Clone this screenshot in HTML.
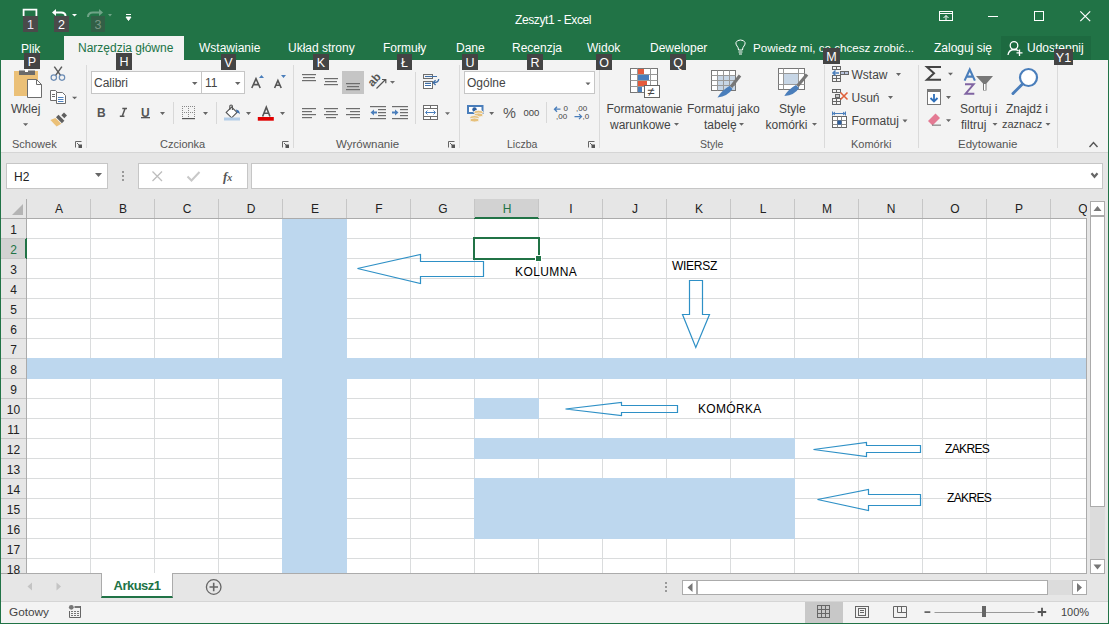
<!DOCTYPE html>
<html><head><meta charset="utf-8">
<style>
*{margin:0;padding:0;box-sizing:border-box}
html,body{width:1109px;height:624px;overflow:hidden;background:#fff;font-family:"Liberation Sans",sans-serif;position:relative}
.a{position:absolute}
.t{position:absolute;white-space:nowrap;line-height:1}
.kt{position:absolute;background:#444;color:#fff;font-size:12.5px;line-height:18px;text-align:center;height:17px;overflow:hidden}
svg{position:absolute;overflow:visible}
</style></head><body>
<div class="a" style="left:0;top:0;width:1109px;height:60px;background:#217346"></div>
<div class="t" style="left:515px;top:14px;font-size:12px;letter-spacing:-0.4px;color:#fff">Zeszyt1 - Excel</div>
<div class="a" style="left:64px;top:36px;width:120px;height:24px;background:#f3f3f3"></div>
<div class="t" style="left:21px;top:43px;font-size:12px;color:#fff">Plik</div>
<div class="t" style="left:78px;top:42px;font-size:12px;color:#217346">Narzędzia główne</div>
<div class="t" style="left:199px;top:42px;font-size:12px;color:#fff">Wstawianie</div>
<div class="t" style="left:288px;top:42px;font-size:12px;color:#fff">Układ strony</div>
<div class="t" style="left:383px;top:42px;font-size:12px;color:#fff">Formuły</div>
<div class="t" style="left:456px;top:42px;font-size:12px;color:#fff">Dane</div>
<div class="t" style="left:512px;top:42px;font-size:12px;color:#fff">Recenzja</div>
<div class="t" style="left:587px;top:42px;font-size:12px;color:#fff">Widok</div>
<div class="t" style="left:650px;top:42px;font-size:12px;color:#fff">Deweloper</div>
<div class="t" style="left:753px;top:42px;font-size:11.6px;color:#fff">Powiedz mi, co chcesz zrobić...</div>
<div class="t" style="left:934px;top:42px;font-size:12px;color:#fff">Zaloguj się</div>
<div class="a" style="left:1001px;top:36px;width:90px;height:24px;background:#1d6a40"></div>
<div class="t" style="left:1027px;top:42px;font-size:12px;color:#fff">Udostępnij</div>
<div class="a" style="left:0;top:60px;width:1109px;height:93px;background:#f3f3f3;border-bottom:1px solid #d5d5d5"></div>
<div class="a" style="left:0;top:153px;width:1109px;height:421px;background:#e6e6e6"></div>
<div class="a" style="left:6px;top:163px;width:102px;height:26px;background:#fff;border:1px solid #c6c6c6"></div>
<div class="t" style="left:14px;top:171px;font-size:12px;color:#222">H2</div>
<div class="a" style="left:138px;top:163px;width:110px;height:26px;background:#fff;border:1px solid #c6c6c6"></div>
<div class="a" style="left:251px;top:163px;width:852px;height:26px;background:#fff;border:1px solid #c6c6c6"></div>
<svg style="left:0;top:0" width="1" height="1">
<path d="M95,173 H102 L98.5,177 Z" fill="#666"/>
<g fill="#999"><rect x="122" y="171" width="2" height="2"/><rect x="122" y="175" width="2" height="2"/><rect x="122" y="179" width="2" height="2"/></g>
<path d="M152.5,171.5 L162,181 M162,171.5 L152.5,181" stroke="#bdbdbd" stroke-width="1.3" fill="none"/>
<path d="M187.5,176.5 L191.5,180.5 L199.5,172" stroke="#c8c8c8" stroke-width="2" fill="none"/>
<path d="M1091.5,173.2 L1094.5,176.8 L1097.5,173.2" stroke="#666" stroke-width="2.2" fill="none"/>
</svg>
<div class="t" style="left:223px;top:170px;font-size:13px;font-style:italic;font-family:'Liberation Serif',serif;font-weight:bold;color:#555">f<span style="font-size:10px">x</span></div>

<!-- ===== ribbon content ===== -->
<!-- group separators -->
<div class="a" style="left:86px;top:65px;width:1px;height:83px;background:#dadada"></div>
<div class="a" style="left:293px;top:65px;width:1px;height:83px;background:#dadada"></div>
<div class="a" style="left:459px;top:65px;width:1px;height:83px;background:#dadada"></div>
<div class="a" style="left:599px;top:65px;width:1px;height:83px;background:#dadada"></div>
<div class="a" style="left:824px;top:65px;width:1px;height:83px;background:#dadada"></div>
<div class="a" style="left:918px;top:65px;width:1px;height:83px;background:#dadada"></div>
<div class="a" style="left:1057px;top:65px;width:1px;height:83px;background:#dadada"></div>
<!-- group labels -->
<div class="t" style="left:12px;top:139px;font-size:11px;color:#555">Schowek</div>
<div class="t" style="left:160px;top:139px;font-size:11px;color:#555">Czcionka</div>
<div class="t" style="left:336px;top:139px;font-size:11.5px;color:#555">Wyrównanie</div>
<div class="t" style="left:507px;top:139px;font-size:10.5px;color:#555">Liczba</div>
<div class="t" style="left:700px;top:139px;font-size:10.5px;color:#555">Style</div>
<div class="t" style="left:851px;top:139px;font-size:11px;color:#555">Komórki</div>
<div class="t" style="left:958px;top:139px;font-size:11.5px;color:#555">Edytowanie</div>
<!-- launchers -->
<svg style="left:0;top:0" width="1" height="1">
<path d="M75.5,147.5 V141.5 H81.5" fill="none" stroke="#666" stroke-width="1"/><path d="M77,143 L80,146" stroke="#666" stroke-width="1"/><rect x="78.5" y="144.5" width="3.5" height="3.5" fill="#555"/>
<path d="M282.5,147.5 V141.5 H288.5" fill="none" stroke="#666" stroke-width="1"/><path d="M284,143 L287,146" stroke="#666" stroke-width="1"/><rect x="285.5" y="144.5" width="3.5" height="3.5" fill="#555"/>
<path d="M448.5,147.5 V141.5 H454.5" fill="none" stroke="#666" stroke-width="1"/><path d="M450,143 L453,146" stroke="#666" stroke-width="1"/><rect x="451.5" y="144.5" width="3.5" height="3.5" fill="#555"/>
<path d="M588.5,147.5 V141.5 H594.5" fill="none" stroke="#666" stroke-width="1"/><path d="M590,143 L593,146" stroke="#666" stroke-width="1"/><rect x="591.5" y="144.5" width="3.5" height="3.5" fill="#555"/>
<path d="M1089.5,147 L1093.5,142.5 L1097.5,147" fill="none" stroke="#555" stroke-width="1.4"/>
</svg>

<!-- ===== Clipboard ===== -->
<svg style="left:0;top:0" width="1" height="1">
<rect x="14" y="71" width="24" height="25" fill="#ebc077"/>
<rect x="19" y="70.5" width="16" height="4.5" fill="#6a6a6a"/>
<rect x="25" y="69" width="3" height="3" fill="#fff"/>
<path d="M27.5,79.5 H36.5 L41.5,84.5 V97.5 H27.5 Z" fill="#fff" stroke="#6d6d6d" stroke-width="1"/>
<path d="M36.5,79.5 V84.5 H41.5" fill="none" stroke="#6d6d6d" stroke-width="1"/>
<!-- scissors -->
<path d="M54.3,66.6 L60.6,75.4 M61.9,66.6 L55.6,75.4" stroke="#5a5a5a" stroke-width="1.5" fill="none"/>
<circle cx="53.8" cy="77.6" r="2.7" fill="none" stroke="#6b8cb5" stroke-width="1.2"/>
<circle cx="62" cy="77.6" r="2.7" fill="none" stroke="#6b8cb5" stroke-width="1.2"/>
<!-- copy -->
<path d="M50.5,90.5 H55.5 L57.5,92.5 V100.5 H50.5 Z" fill="#fff" stroke="#6d6d6d"/>
<path d="M52,94.5 H55 M52,96.5 H55" stroke="#6d6d6d"/>
<path d="M56.5,92.5 H62.5 L65.5,95.5 V103.5 H56.5 Z" fill="#fff" stroke="#6d6d6d"/>
<path d="M58,97.5 H63.5 M58,99.5 H63.5 M58,101.5 H63.5" stroke="#4f81bd"/>
<!-- painter -->
<path d="M61.3,115.2 L64,112.5 L67,115.5 L64.3,118.2 Z" fill="#5f5f5f"/>
<path d="M56,117.3 L58.5,114.8 L64.4,120.7 L61.9,123.2 Z" fill="#5f5f5f"/>
<path d="M55.4,117.9 L61.3,123.8 L56.6,126.4 L50.4,120 Z" fill="#ebc077"/>
<!-- arrows -->
<path d="M23,123.3 H28.2 L25.6,126 Z M72,96.7 H77.2 L74.6,99.3 Z" fill="#666"/>
</svg>
<div class="t" style="left:11px;top:103px;font-size:12px;color:#444">Wklej</div>

<!-- ===== Font ===== -->
<div class="a" style="left:91px;top:71px;width:111px;height:23px;background:#fff;border:1px solid #c6c6c6"></div>
<div class="a" style="left:201px;top:71px;width:44px;height:23px;background:#fff;border:1px solid #c6c6c6"></div>
<div class="t" style="left:94px;top:77px;font-size:12px;color:#444">Calibri</div>
<div class="t" style="left:205px;top:77px;font-size:12px;color:#444">11</div>
<div class="t" style="left:97px;top:107px;font-size:12px;font-weight:bold;color:#555">B</div>
<div class="t" style="left:141px;top:107px;font-size:12px;font-weight:bold;color:#555">U</div>
<svg style="left:0;top:0" width="1" height="1">
<path d="M259,78 L261.5,75 L264,78 Z M281,75 H286 L283.5,78 Z" fill="#4a7ebb"/>
<rect x="141" y="117" width="9" height="1.3" fill="#555"/>
<g fill="#666">
<path d="M192,82 H197.5 L194.75,85 Z M235,82 H240.5 L237.75,85 Z"/>
<path d="M160,112 H165 L162.5,115 Z M203,112 H208 L205.5,115 Z M246,112 H251 L248.5,115 Z M280,112 H285 L282.5,115 Z"/>
</g>
<rect x="173" y="102" width="1" height="22" fill="#d8d8d8"/>
<rect x="216" y="102" width="1" height="22" fill="#d8d8d8"/>
<!-- borders icon -->
<g fill="#888">
<path d="M182,106 h13 v1 h-13z M182,106 v13 h1 v-13z M194,106 v13 h1 v-13z" fill="none"/>
</g>
<g stroke="#888" stroke-width="1" stroke-dasharray="1,1" fill="none">
<path d="M182.5,106 V118 M194.5,106 V118 M182,106.5 H195 M188.5,106 V118 M182,112.5 H195"/>
</g>
<rect x="182" y="118" width="13" height="1.2" fill="#555"/>
<!-- fill icon -->
<path d="M226.2,112.4 L231.6,107 L237,112.4 L231.6,117.8 Z" fill="#fff" stroke="#555" stroke-width="1.1"/>
<path d="M229.8,110 V106 Q229.8,105 231.1,105 Q232.4,105 232.4,106 V110" fill="none" stroke="#555" stroke-width="1.1"/>
<path d="M235.8,109.6 Q239.8,110 239.8,114.2 Q238.5,112.8 236.9,112.6 Z" fill="#3f6fa8"/>
<rect x="224" y="117.5" width="16" height="3" fill="#b3cde8"/>
<rect x="257.8" y="117" width="16" height="3.7" fill="#e00000"/>
</svg>

<svg style="left:0;top:0" width="1" height="1">
<g stroke="#555" stroke-width="1.6" fill="none">
<path d="M251.8,88 L256,78.6 L260.2,88 M253.3,84.6 H258.7"/>
<path d="M274.6,88 L277.9,80.4 L281.2,88 M275.8,85.3 H280"/>
<path d="M262.6,116.5 L266.3,107.2 L270,116.5 M264.2,113.2 H268.4"/>
</g>
<path d="M125,108.7 L122.2,116.2 M122.3,108.6 H127 M119.8,116.2 H124.4" stroke="#555" stroke-width="1.5" fill="none"/>
</svg>
<!-- ===== Alignment ===== -->
<div class="a" style="left:342px;top:71px;width:22px;height:23px;background:#c5c5c5"></div>
<svg style="left:0;top:0" width="1" height="1">
<g fill="#6d6d6d">
<rect x="302" y="74" width="14" height="1.2"/><rect x="303" y="77" width="12" height="1.2"/><rect x="302" y="80" width="14" height="1.2"/>
<rect x="324" y="78" width="14" height="1.2"/><rect x="325" y="81" width="12" height="1.2"/><rect x="324" y="84" width="14" height="1.2"/>
<rect x="346" y="83" width="14" height="1.2"/><rect x="347" y="86" width="12" height="1.2"/><rect x="346" y="89" width="14" height="1.2"/>
<rect x="302" y="108" width="14" height="1.2"/><rect x="302" y="111" width="10" height="1.2"/><rect x="302" y="114" width="14" height="1.2"/><rect x="302" y="117" width="10" height="1.2"/>
<rect x="324" y="108" width="14" height="1.2"/><rect x="326" y="111" width="10" height="1.2"/><rect x="324" y="114" width="14" height="1.2"/><rect x="326" y="117" width="10" height="1.2"/>
<rect x="346" y="108" width="14" height="1.2"/><rect x="350" y="111" width="10" height="1.2"/><rect x="346" y="114" width="14" height="1.2"/><rect x="350" y="117" width="10" height="1.2"/>
<!-- indents -->
<rect x="370" y="106" width="16" height="1.2"/><rect x="378" y="109" width="8" height="1.2"/><rect x="378" y="112" width="8" height="1.2"/><rect x="378" y="115" width="8" height="1.2"/><rect x="370" y="118" width="16" height="1.2"/>
<rect x="392" y="106" width="16" height="1.2"/><rect x="400" y="109" width="8" height="1.2"/><rect x="400" y="112" width="8" height="1.2"/><rect x="400" y="115" width="8" height="1.2"/><rect x="392" y="118" width="16" height="1.2"/>
<path d="M390,81 H395 L392.5,83.7 Z M445,112.2 H450 L447.5,115 Z"/>
</g>
<path d="M370.5,112.5 L374,109.5 V111.5 H377 V113.5 H374 V115.5 Z" fill="#4a7ebb"/>
<path d="M398.5,112.5 L395,109.5 V111.5 H392 V113.5 H395 V115.5 Z" fill="#4a7ebb"/>
<!-- orientation -->
<text x="0" y="0" transform="translate(372.5,87.3) rotate(-48)" font-family="Liberation Sans" font-size="11.5" font-weight="bold" fill="#555">ab</text>
<path d="M376.5,88.5 L385.5,79.5 M382,79.5 H385.8 V83.3" stroke="#555" stroke-width="1.2" fill="none"/>
<!-- wrap text -->
<rect x="423.5" y="74.5" width="9" height="4" fill="none" stroke="#6d6d6d"/>
<rect x="423.5" y="81.5" width="9" height="7" fill="#fff" stroke="#6d6d6d"/>
<path d="M425,76.5 H437 M425,83.4 H431 M425,85.5 H431" stroke="#3f6fa8" stroke-width="1.1"/>
<path d="M438.7,79 Q438.7,82.6 433.5,82.6" fill="none" stroke="#3f6fa8" stroke-width="1.3"/>
<path d="M435.6,80.2 L433.1,82.6 L435.6,85" fill="none" stroke="#3f6fa8" stroke-width="1.3"/>
<!-- merge -->
<rect x="423.5" y="105.5" width="14" height="14" fill="#fff" stroke="#6d6d6d"/>
<path d="M423.5,108.5 H437.5 M423.5,116.5 H437.5 M430.5,105.5 V108.5 M430.5,116.5 V119.5" stroke="#6d6d6d" fill="none"/>
<path d="M426,112.5 H435 M427.5,110.5 L425.5,112.5 L427.5,114.5 M433.5,110.5 L435.5,112.5 L433.5,114.5" stroke="#4a7ebb" fill="none"/>
</svg>
<div class="a" style="left:415px;top:72px;width:1px;height:52px;background:#d8d8d8"></div>

<!-- ===== Number ===== -->
<div class="a" style="left:464px;top:71px;width:131px;height:23px;background:#fff;border:1px solid #c6c6c6"></div>
<div class="t" style="left:467px;top:77px;font-size:12px;color:#444">Ogólne</div>
<div class="t" style="left:503px;top:106px;font-size:14.5px;color:#555">%</div>
<div class="t" style="left:523.5px;top:107.5px;font-size:9.5px;color:#444">000</div>
<div class="t" style="left:563.5px;top:105px;font-size:8px;color:#444">0</div>
<div class="t" style="left:556px;top:112.5px;font-size:8px;color:#444">,00</div>
<div class="t" style="left:576px;top:105px;font-size:8px;color:#444">,00</div>
<div class="t" style="left:582.5px;top:112.5px;font-size:8px;color:#444">,0</div>
<div class="a" style="left:546px;top:102px;width:1px;height:21px;background:#d8d8d8"></div>
<svg style="left:0;top:0" width="1" height="1">
<path d="M585.5,82.5 H590.5 L588,85.2 Z M489.2,112 H494.1 L491.65,115 Z" fill="#666"/>
<rect x="468" y="106" width="14.5" height="7" fill="#fff" stroke="#4a7ebb" stroke-width="2"/>
<circle cx="474.5" cy="109.5" r="2.2" fill="#2e5f9e"/>
<g fill="#e6c07b" stroke="#f3f3f3" stroke-width="0.9">
<ellipse cx="478.5" cy="112.3" rx="4.6" ry="2"/>
<ellipse cx="478.5" cy="115" rx="4.6" ry="2"/>
<ellipse cx="474.5" cy="117.5" rx="4.6" ry="2"/>
<ellipse cx="474.5" cy="120" rx="4.6" ry="2"/>
</g>
<path d="M554.5,109.2 H560.5 M557,106.7 L554.5,109.2 L557,111.7" stroke="#4a7ebb" stroke-width="1.3" fill="none"/>
<path d="M574.5,116.6 H581.5 M579,114.1 L581.5,116.6 L579,119.1" stroke="#4a7ebb" stroke-width="1.3" fill="none"/>
</svg>

<!-- ===== Styles ===== -->
<div class="t" style="left:606.5px;top:103px;font-size:12px;color:#444">Formatowanie</div>
<div class="t" style="left:610px;top:119px;font-size:12px;color:#444">warunkowe</div>
<div class="t" style="left:687px;top:103px;font-size:12px;color:#444">Formatuj jako</div>
<div class="t" style="left:704px;top:119px;font-size:12px;color:#444">tabelę</div>
<div class="t" style="left:779px;top:103px;font-size:12px;color:#444">Style</div>
<div class="t" style="left:765.5px;top:119px;font-size:12px;color:#444">komórki</div>
<svg style="left:0;top:0" width="1" height="1">
<path d="M674,123 H679 L676.5,125.7 Z M739,123 H744 L741.5,125.7 Z M812,123 H817 L814.5,125.7 Z" fill="#666"/>
<!-- cond fmt -->
<rect x="630.5" y="68.5" width="27" height="24" fill="#fff" stroke="#777"/>
<path d="M637.5,68.5 V92.5 M650.5,68.5 V92.5 M630.5,74.5 H657.5 M630.5,80.5 H657.5 M630.5,86.5 H657.5" stroke="#999" fill="none"/>
<rect x="638" y="69" width="6" height="5" fill="#e55b3c"/>
<rect x="638" y="75" width="11" height="5" fill="#4a7ebb"/>
<rect x="638" y="81" width="9" height="5" fill="#e55b3c"/>
<rect x="638" y="87" width="4" height="5" fill="#4a7ebb"/>
<rect x="644.5" y="85.5" width="15" height="12" fill="#fff" stroke="#666"/>
<text x="647.3" y="96" font-family="Liberation Sans" font-size="13" fill="#444">≠</text>
<!-- fmt as table -->
<rect x="711.5" y="70.5" width="24" height="20" fill="#fff" stroke="#777"/>
<rect x="718" y="75" width="17" height="15" fill="#c7d6e6"/>
<path d="M717.5,70.5 V90.5 M723.5,70.5 V90.5 M729.5,70.5 V90.5 M711.5,75.5 H735.5 M711.5,80.5 H735.5 M711.5,85.5 H735.5" stroke="#999" fill="none"/>
<path d="M740,75.5 L731,87" stroke="#777" stroke-width="3.2"/>
<path d="M729.5,86 L732.5,89 Q728,96 717.5,97.5 Q722,90 729.5,86 Z" fill="#4a7ebb"/>
<!-- cell styles -->
<rect x="778.5" y="68.5" width="26" height="21" fill="#fff" stroke="#777"/>
<rect x="784" y="74" width="14" height="10" fill="#c7d6e6"/>
<path d="M783.5,68.5 V89.5 M798.5,68.5 V89.5 M778.5,73.5 H804.5 M778.5,84.5 H804.5" stroke="#999" fill="none"/>
<path d="M807,74.5 L797.5,86" stroke="#777" stroke-width="3.2"/>
<path d="M796,85 L799,88 Q795,95 784.3,96 Q788.5,89 796,85 Z" fill="#4a7ebb"/>
</svg>

<!-- ===== Cells ===== -->
<div class="t" style="left:851.5px;top:69px;font-size:12px;color:#444">Wstaw</div>
<div class="t" style="left:851.5px;top:92px;font-size:12px;color:#444">Usuń</div>
<div class="t" style="left:851.5px;top:115px;font-size:12px;color:#444">Formatuj</div>
<svg style="left:0;top:0" width="1" height="1">
<path d="M896,73 H901 L898.5,76 Z M888,96 H893 L890.5,99 Z M902.5,119.4 H907.5 L905,122.4 Z" fill="#666"/>
<g fill="none" stroke="#666" stroke-width="1">
<rect x="832.5" y="66.5" width="4" height="3"/><rect x="836.5" y="66.5" width="4" height="3"/>
<rect x="832.5" y="75.5" width="4" height="3"/><rect x="836.5" y="75.5" width="4" height="3"/>
<rect x="832.5" y="78.5" width="4" height="3"/><rect x="836.5" y="78.5" width="4" height="3"/>
<rect x="840.5" y="71.5" width="4" height="3" fill="#b8c3dc"/><rect x="844.5" y="71.5" width="4" height="3" fill="#b8c3dc"/>
<rect x="832.5" y="89.5" width="4" height="3"/><rect x="836.5" y="89.5" width="4" height="3"/>
<rect x="835.5" y="94.5" width="4" height="3" fill="#ccc"/>
<rect x="832.5" y="98.5" width="4" height="3"/><rect x="836.5" y="98.5" width="4" height="3"/>
<rect x="832.5" y="101.5" width="4" height="3"/><rect x="836.5" y="101.5" width="4" height="3"/>
</g>
<path d="M833,73 H839 M835.5,70.5 L833,73 L835.5,75.5" stroke="#4a7ebb" stroke-width="1.5" fill="none"/>
<path d="M840.5,92.5 L847.5,99.5 M847.5,92.5 L840.5,99.5" stroke="#e0603a" stroke-width="1.6"/>
<rect x="832.5" y="116.5" width="14" height="11" fill="#fff" stroke="#666"/>
<path d="M837.5,116.5 V127.5 M841.5,116.5 V127.5 M832.5,120.5 H846.5 M832.5,124.5 H846.5" stroke="#888"/>
<rect x="837.5" y="120.5" width="4" height="4" fill="#2e5f9e"/>
<path d="M833,113.5 H845 M832.5,111.5 V115.5 M845.5,111.5 V115.5 M835,112 L833,113.5 L835,115 M843,112 L845,113.5 L843,115" stroke="#4a7ebb" fill="none"/>
</svg>

<!-- ===== Editing ===== -->
<div class="t" style="left:960px;top:103px;font-size:12px;color:#444">Sortuj i</div>
<div class="t" style="left:961px;top:119px;font-size:12px;color:#444">filtruj</div>
<div class="t" style="left:1006px;top:103px;font-size:12px;color:#444">Znajdź i</div>
<div class="t" style="left:1002px;top:119px;font-size:11px;color:#444">zaznacz</div>
<svg style="left:0;top:0" width="1" height="1">
<path d="M948,72.7 H953 L950.5,75.6 Z M946,96 H951 L948.5,99 Z M946,119.2 H951 L948.5,122 Z M992.5,123 H997.5 L995,125.7 Z M1045.5,123 H1050.5 L1048,125.7 Z" fill="#666"/>
<path d="M941,67 H927 L934,73.3 L927,79.7 H941" fill="none" stroke="#444" stroke-width="2"/>
<rect x="927.5" y="89.5" width="13" height="15" fill="#fff" stroke="#777"/>
<rect x="927" y="89" width="14" height="3" fill="#777"/>
<path d="M934,94 V101.5 M930.5,98 L934,101.5 L937.5,98" stroke="#2e6fba" stroke-width="1.8" fill="none"/>
<path d="M928,121 L935.5,113.5 L940,118 L932.5,125.5 Z" fill="#e47a93"/>
<rect x="932" y="124.6" width="9" height="1.1" fill="#777"/>
<path d="M964.6,80.6 L969.75,69.6 L974.9,80.6 M966.5,76.6 H973" stroke="#4a7ebb" stroke-width="2.1" fill="none"/>
<path d="M965,84.3 H973.6 L965.6,93.7 H974.3" stroke="#8064a2" stroke-width="2" fill="none"/>
<path d="M976,76 H993 L986.5,83.5 V90.5 H983 V83.5 Z" fill="#777"/>
<rect x="984" y="84" width="1.5" height="6" fill="#fff"/>
<circle cx="1028.5" cy="77.5" r="8.5" fill="#fff" stroke="#4a7ebb" stroke-width="2.2"/>
<path d="M1022.5,84 L1013,93.5" stroke="#4a7ebb" stroke-width="3" stroke-linecap="round"/>
</svg>

<div class="a" style="left:27px;top:219px;width:1059px;height:354px;background:#fff"></div>
<div class="a" style="left:90px;top:219px;width:1px;height:354px;background:#dadcdd"></div>
<div class="a" style="left:154px;top:219px;width:1px;height:354px;background:#dadcdd"></div>
<div class="a" style="left:218px;top:219px;width:1px;height:354px;background:#dadcdd"></div>
<div class="a" style="left:282px;top:219px;width:1px;height:354px;background:#dadcdd"></div>
<div class="a" style="left:346px;top:219px;width:1px;height:354px;background:#dadcdd"></div>
<div class="a" style="left:410px;top:219px;width:1px;height:354px;background:#dadcdd"></div>
<div class="a" style="left:474px;top:219px;width:1px;height:354px;background:#dadcdd"></div>
<div class="a" style="left:538px;top:219px;width:1px;height:354px;background:#dadcdd"></div>
<div class="a" style="left:602px;top:219px;width:1px;height:354px;background:#dadcdd"></div>
<div class="a" style="left:666px;top:219px;width:1px;height:354px;background:#dadcdd"></div>
<div class="a" style="left:730px;top:219px;width:1px;height:354px;background:#dadcdd"></div>
<div class="a" style="left:794px;top:219px;width:1px;height:354px;background:#dadcdd"></div>
<div class="a" style="left:858px;top:219px;width:1px;height:354px;background:#dadcdd"></div>
<div class="a" style="left:922px;top:219px;width:1px;height:354px;background:#dadcdd"></div>
<div class="a" style="left:986px;top:219px;width:1px;height:354px;background:#dadcdd"></div>
<div class="a" style="left:1050px;top:219px;width:1px;height:354px;background:#dadcdd"></div>
<div class="a" style="left:27px;top:238px;width:1059px;height:1px;background:#dadcdd"></div>
<div class="a" style="left:27px;top:258px;width:1059px;height:1px;background:#dadcdd"></div>
<div class="a" style="left:27px;top:278px;width:1059px;height:1px;background:#dadcdd"></div>
<div class="a" style="left:27px;top:298px;width:1059px;height:1px;background:#dadcdd"></div>
<div class="a" style="left:27px;top:318px;width:1059px;height:1px;background:#dadcdd"></div>
<div class="a" style="left:27px;top:338px;width:1059px;height:1px;background:#dadcdd"></div>
<div class="a" style="left:27px;top:358px;width:1059px;height:1px;background:#dadcdd"></div>
<div class="a" style="left:27px;top:378px;width:1059px;height:1px;background:#dadcdd"></div>
<div class="a" style="left:27px;top:398px;width:1059px;height:1px;background:#dadcdd"></div>
<div class="a" style="left:27px;top:418px;width:1059px;height:1px;background:#dadcdd"></div>
<div class="a" style="left:27px;top:438px;width:1059px;height:1px;background:#dadcdd"></div>
<div class="a" style="left:27px;top:458px;width:1059px;height:1px;background:#dadcdd"></div>
<div class="a" style="left:27px;top:478px;width:1059px;height:1px;background:#dadcdd"></div>
<div class="a" style="left:27px;top:498px;width:1059px;height:1px;background:#dadcdd"></div>
<div class="a" style="left:27px;top:518px;width:1059px;height:1px;background:#dadcdd"></div>
<div class="a" style="left:27px;top:538px;width:1059px;height:1px;background:#dadcdd"></div>
<div class="a" style="left:27px;top:558px;width:1059px;height:1px;background:#dadcdd"></div>
<div class="a" style="left:282px;top:219px;width:65px;height:354px;background:#bdd7ee"></div>
<div class="a" style="left:27px;top:358px;width:1059px;height:21px;background:#bdd7ee"></div>
<div class="a" style="left:474px;top:398px;width:65px;height:21px;background:#bdd7ee"></div>
<div class="a" style="left:474px;top:438px;width:321px;height:21px;background:#bdd7ee"></div>
<div class="a" style="left:474px;top:478px;width:321px;height:61px;background:#bdd7ee"></div>
<div class="a" style="left:1086px;top:218px;width:1px;height:356px;background:#ababab"></div>
<div class="a" style="left:0px;top:573px;width:1087px;height:1px;background:#ababab"></div>
<div class="a" style="left:1px;top:199px;width:1085px;height:19px;background:#e6e6e6"></div>
<div class="a" style="left:474px;top:199px;width:65px;height:19px;background:#d2d2d2"></div>
<div class="a" style="left:1px;top:218px;width:1085px;height:1px;background:#ababab"></div>
<div class="a" style="left:474px;top:217px;width:65px;height:2px;background:#217346"></div>
<div class="a" style="left:26px;top:199px;width:1px;height:19px;background:#c6c6c6"></div>
<div class="a" style="left:90px;top:199px;width:1px;height:19px;background:#c6c6c6"></div>
<div class="a" style="left:154px;top:199px;width:1px;height:19px;background:#c6c6c6"></div>
<div class="a" style="left:218px;top:199px;width:1px;height:19px;background:#c6c6c6"></div>
<div class="a" style="left:282px;top:199px;width:1px;height:19px;background:#c6c6c6"></div>
<div class="a" style="left:346px;top:199px;width:1px;height:19px;background:#c6c6c6"></div>
<div class="a" style="left:410px;top:199px;width:1px;height:19px;background:#c6c6c6"></div>
<div class="a" style="left:474px;top:199px;width:1px;height:19px;background:#c6c6c6"></div>
<div class="a" style="left:538px;top:199px;width:1px;height:19px;background:#c6c6c6"></div>
<div class="a" style="left:602px;top:199px;width:1px;height:19px;background:#c6c6c6"></div>
<div class="a" style="left:666px;top:199px;width:1px;height:19px;background:#c6c6c6"></div>
<div class="a" style="left:730px;top:199px;width:1px;height:19px;background:#c6c6c6"></div>
<div class="a" style="left:794px;top:199px;width:1px;height:19px;background:#c6c6c6"></div>
<div class="a" style="left:858px;top:199px;width:1px;height:19px;background:#c6c6c6"></div>
<div class="a" style="left:922px;top:199px;width:1px;height:19px;background:#c6c6c6"></div>
<div class="a" style="left:986px;top:199px;width:1px;height:19px;background:#c6c6c6"></div>
<div class="a" style="left:1050px;top:199px;width:1px;height:19px;background:#c6c6c6"></div>
<div class="t" style="left:29px;width:60px;text-align:center;top:203px;font-size:12px;color:#222">A</div>
<div class="t" style="left:93px;width:60px;text-align:center;top:203px;font-size:12px;color:#222">B</div>
<div class="t" style="left:157px;width:60px;text-align:center;top:203px;font-size:12px;color:#222">C</div>
<div class="t" style="left:221px;width:60px;text-align:center;top:203px;font-size:12px;color:#222">D</div>
<div class="t" style="left:285px;width:60px;text-align:center;top:203px;font-size:12px;color:#222">E</div>
<div class="t" style="left:349px;width:60px;text-align:center;top:203px;font-size:12px;color:#222">F</div>
<div class="t" style="left:413px;width:60px;text-align:center;top:203px;font-size:12px;color:#222">G</div>
<div class="t" style="left:477px;width:60px;text-align:center;top:203px;font-size:12px;color:#217346">H</div>
<div class="t" style="left:541px;width:60px;text-align:center;top:203px;font-size:12px;color:#222">I</div>
<div class="t" style="left:605px;width:60px;text-align:center;top:203px;font-size:12px;color:#222">J</div>
<div class="t" style="left:669px;width:60px;text-align:center;top:203px;font-size:12px;color:#222">K</div>
<div class="t" style="left:733px;width:60px;text-align:center;top:203px;font-size:12px;color:#222">L</div>
<div class="t" style="left:797px;width:60px;text-align:center;top:203px;font-size:12px;color:#222">M</div>
<div class="t" style="left:861px;width:60px;text-align:center;top:203px;font-size:12px;color:#222">N</div>
<div class="t" style="left:925px;width:60px;text-align:center;top:203px;font-size:12px;color:#222">O</div>
<div class="t" style="left:989px;width:60px;text-align:center;top:203px;font-size:12px;color:#222">P</div>
<div class="t" style="left:1053px;width:60px;text-align:center;top:203px;font-size:12px;color:#222">Q</div>
<div class="a" style="left:1087px;top:199px;width:21px;height:20px;background:#e6e6e6"></div>
<svg style="left:0;top:0" width="1" height="1"><polygon points="12,215 23,215 23,204" fill="#b4b4b4"/></svg>
<div class="a" style="left:1px;top:219px;width:25px;height:354px;background:#e6e6e6"></div>
<div class="a" style="left:1px;top:239px;width:25px;height:19px;background:#d2d2d2"></div>
<div class="a" style="left:26px;top:199px;width:1px;height:375px;background:#ababab"></div>
<div class="a" style="left:25px;top:238px;width:2px;height:21px;background:#217346"></div>
<div class="a" style="left:1px;top:238px;width:25px;height:1px;background:#c6c6c6"></div>
<div class="t" style="left:0px;width:27px;text-align:center;top:224px;font-size:12px;color:#222">1</div>
<div class="a" style="left:1px;top:258px;width:25px;height:1px;background:#c6c6c6"></div>
<div class="t" style="left:0px;width:27px;text-align:center;top:244px;font-size:12px;color:#217346">2</div>
<div class="a" style="left:1px;top:278px;width:25px;height:1px;background:#c6c6c6"></div>
<div class="t" style="left:0px;width:27px;text-align:center;top:264px;font-size:12px;color:#222">3</div>
<div class="a" style="left:1px;top:298px;width:25px;height:1px;background:#c6c6c6"></div>
<div class="t" style="left:0px;width:27px;text-align:center;top:284px;font-size:12px;color:#222">4</div>
<div class="a" style="left:1px;top:318px;width:25px;height:1px;background:#c6c6c6"></div>
<div class="t" style="left:0px;width:27px;text-align:center;top:304px;font-size:12px;color:#222">5</div>
<div class="a" style="left:1px;top:338px;width:25px;height:1px;background:#c6c6c6"></div>
<div class="t" style="left:0px;width:27px;text-align:center;top:324px;font-size:12px;color:#222">6</div>
<div class="a" style="left:1px;top:358px;width:25px;height:1px;background:#c6c6c6"></div>
<div class="t" style="left:0px;width:27px;text-align:center;top:344px;font-size:12px;color:#222">7</div>
<div class="a" style="left:1px;top:378px;width:25px;height:1px;background:#c6c6c6"></div>
<div class="t" style="left:0px;width:27px;text-align:center;top:364px;font-size:12px;color:#222">8</div>
<div class="a" style="left:1px;top:398px;width:25px;height:1px;background:#c6c6c6"></div>
<div class="t" style="left:0px;width:27px;text-align:center;top:384px;font-size:12px;color:#222">9</div>
<div class="a" style="left:1px;top:418px;width:25px;height:1px;background:#c6c6c6"></div>
<div class="t" style="left:0px;width:27px;text-align:center;top:404px;font-size:12px;color:#222">10</div>
<div class="a" style="left:1px;top:438px;width:25px;height:1px;background:#c6c6c6"></div>
<div class="t" style="left:0px;width:27px;text-align:center;top:424px;font-size:12px;color:#222">11</div>
<div class="a" style="left:1px;top:458px;width:25px;height:1px;background:#c6c6c6"></div>
<div class="t" style="left:0px;width:27px;text-align:center;top:444px;font-size:12px;color:#222">12</div>
<div class="a" style="left:1px;top:478px;width:25px;height:1px;background:#c6c6c6"></div>
<div class="t" style="left:0px;width:27px;text-align:center;top:464px;font-size:12px;color:#222">13</div>
<div class="a" style="left:1px;top:498px;width:25px;height:1px;background:#c6c6c6"></div>
<div class="t" style="left:0px;width:27px;text-align:center;top:484px;font-size:12px;color:#222">14</div>
<div class="a" style="left:1px;top:518px;width:25px;height:1px;background:#c6c6c6"></div>
<div class="t" style="left:0px;width:27px;text-align:center;top:504px;font-size:12px;color:#222">15</div>
<div class="a" style="left:1px;top:538px;width:25px;height:1px;background:#c6c6c6"></div>
<div class="t" style="left:0px;width:27px;text-align:center;top:524px;font-size:12px;color:#222">16</div>
<div class="a" style="left:1px;top:558px;width:25px;height:1px;background:#c6c6c6"></div>
<div class="t" style="left:0px;width:27px;text-align:center;top:544px;font-size:12px;color:#222">17</div>
<div class="a" style="left:1px;top:578px;width:25px;height:1px;background:#c6c6c6"></div>
<div class="t" style="left:0px;width:27px;text-align:center;top:564px;font-size:12px;color:#222">18</div>
<div class="a" style="left:473px;top:237px;width:67px;height:23px;border:2px solid #217346"></div>
<div class="a" style="left:535px;top:255px;width:7px;height:7px;background:#217346;border:1px solid #fff"></div>
<div class="t" style="left:515px;top:266px;font-size:12px;letter-spacing:0.4px;color:#000">KOLUMNA</div>
<div class="t" style="left:672px;top:260px;font-size:12px;letter-spacing:-0.28px;color:#000">WIERSZ</div>
<div class="t" style="left:698px;top:403px;font-size:12px;letter-spacing:0.33px;color:#000">KOMÓRKA</div>
<div class="t" style="left:945px;top:443px;font-size:12px;letter-spacing:-0.63px;color:#000">ZAKRES</div>
<div class="t" style="left:947px;top:492px;font-size:12px;letter-spacing:-0.63px;color:#000">ZAKRES</div>
<svg style="left:0;top:0" width="1" height="1"><polygon points="357.5,268.5 420.5,254.5 420.5,261.5 483.5,261.5 483.5,276.5 420.5,276.5 420.5,283.5" fill="none" stroke="#2e90c6" stroke-width="1.2"/><polygon points="565.5,409 621.5,402.5 621.5,405.5 677.5,405.5 677.5,412.5 621.5,412.5 621.5,415.5" fill="none" stroke="#2e90c6" stroke-width="1.2"/><polygon points="813.5,449.5 866.5,442.5 866.5,445.5 920.5,445.5 920.5,452.5 866.5,452.5 866.5,456.5" fill="none" stroke="#2e90c6" stroke-width="1.2"/><polygon points="817.5,499.5 868.5,489.5 868.5,494.5 920.5,494.5 920.5,505.5 868.5,505.5 868.5,510.5" fill="none" stroke="#2e90c6" stroke-width="1.2"/><polygon points="689.5,280.5 702.5,280.5 702.5,314.5 709.5,314.5 695.8,347.5 682.5,314.5 689.5,314.5" fill="none" stroke="#2e90c6" stroke-width="1.2"/></svg>
<!-- vertical scrollbar -->
<div class="a" style="left:1087px;top:199px;width:21px;height:375px;background:#e6e6e6"></div>
<div class="a" style="left:1090px;top:201px;width:15px;height:15px;background:#fff;border:1px solid #ababab"></div>
<div class="a" style="left:1090px;top:216px;width:15px;height:291px;background:#fff;border:1px solid #ababab"></div>
<div class="a" style="left:1090px;top:507px;width:15px;height:52px;background:#dcdcdc"></div>
<div class="a" style="left:1090px;top:559px;width:15px;height:15px;background:#fff;border:1px solid #ababab"></div>
<svg style="left:0;top:0" width="1" height="1">
<path d="M1093.5,211 H1101.5 L1097.5,206 Z M1093.5,564.5 H1101.5 L1097.5,569.5 Z" fill="#777"/>
</svg>
<!-- sheet tab bar -->
<div class="a" style="left:1px;top:574px;width:1107px;height:27px;background:#e6e6e6"></div>
<div class="a" style="left:101px;top:573px;width:72px;height:25px;background:#fff;border-left:1px solid #ababab;border-right:1px solid #ababab;border-bottom:2px solid #217346"></div>
<div class="t" style="left:113.5px;top:579px;font-size:13px;letter-spacing:-0.5px;font-weight:bold;color:#217346">Arkusz1</div>
<svg style="left:0;top:0" width="1" height="1">
<path d="M32,582.5 L27.5,586.5 L32,590.5 Z M56.5,582.5 L61,586.5 L56.5,590.5 Z" fill="#c4c4c4"/>
<circle cx="213.7" cy="587" r="7.3" fill="none" stroke="#666" stroke-width="1.3"/>
<path d="M209.5,587 H218 M213.7,582.8 V591.2" stroke="#666" stroke-width="1.6"/>
<g fill="#999"><rect x="665" y="582" width="2" height="2"/><rect x="665" y="586" width="2" height="2"/><rect x="665" y="590" width="2" height="2"/></g>
</svg>
<!-- horizontal scrollbar -->
<div class="a" style="left:682px;top:580px;width:405px;height:15px;background:#dcdcdc"></div>
<div class="a" style="left:682px;top:580px;width:15px;height:15px;background:#fff;border:1px solid #ababab"></div>
<div class="a" style="left:697px;top:580px;width:351px;height:15px;background:#fff;border:1px solid #ababab"></div>
<div class="a" style="left:1072px;top:580px;width:15px;height:15px;background:#fff;border:1px solid #ababab"></div>
<svg style="left:0;top:0" width="1" height="1">
<path d="M687.5,587.5 L692.5,583 V592 Z M1082,587.5 L1077,583 V592 Z" fill="#777"/>
</svg>
<!-- status bar -->
<div class="a" style="left:0;top:601px;width:1109px;height:23px;background:#f3f3f3;border-top:1px solid #d5d5d5"></div>
<div class="t" style="left:9px;top:607px;font-size:11.8px;color:#444">Gotowy</div>
<div class="t" style="left:1061px;top:607px;font-size:11px;color:#444">100%</div>
<div class="a" style="left:805px;top:602px;width:38px;height:21px;background:#c8c8c8"></div>
<svg style="left:0;top:0" width="1" height="1">
<g fill="none" stroke="#666" stroke-width="1">
<!-- macro -->
<circle cx="71.3" cy="607.3" r="2.4" fill="#777" stroke="none"/>
<rect x="74.5" y="606" width="6.5" height="2" fill="#777" stroke="none"/>
<path d="M69.5,611 V617.5 H80.5 V606"/>
<path d="M71,611.5 H79.5 M71,613.5 H79.5 M71,615.5 H79.5" stroke="#777" stroke-dasharray="2,1"/>
<!-- normal view -->
<rect x="817.5" y="605.5" width="12" height="12"/>
<path d="M821.5,605.5 V617.5 M825.5,605.5 V617.5 M817.5,609.5 H829.5 M817.5,613.5 H829.5"/>
<!-- page layout -->
<rect x="855.5" y="606.5" width="13" height="11"/>
<rect x="858.5" y="608.5" width="7" height="7"/>
<path d="M860,610.5 H864 M860,612.5 H864"/>
<!-- page break -->
<path d="M893.5,617.5 V606.5 H906.5 V617.5 Z M897.5,606.5 V612.5 H906.5 M901.5,606.5 V612.5"/>
</g>
<rect x="924.5" y="611.3" width="5.8" height="1.6" fill="#555"/>
<rect x="934.5" y="612" width="100" height="1" fill="#999"/>
<rect x="982" y="606" width="4" height="11" fill="#666"/>
<path d="M1037.7,612 H1046.2 M1042,607.8 V616.2" stroke="#555" stroke-width="1.8"/>
</svg>
<!-- window border -->
<div class="a" style="left:0;top:0;width:1109px;height:624px;border:1px solid #217346;border-top:0"></div>

<!-- QAT -->
<svg style="left:0;top:0" width="1" height="1">
<path d="M23.6,16 V9.6 H36.4 V16" fill="none" stroke="#fff" stroke-width="1.8"/>
<path d="M55,12.5 H61 Q65.5,12.5 65.5,16" fill="none" stroke="#fff" stroke-width="2"/>
<path d="M52,12.5 L56,9 V16 Z" fill="#fff"/>
<path d="M72,14 H77 L74.5,16.6 Z" fill="#fff"/>
<g opacity="0.35">
<path d="M101,12.5 H93 Q88,12.5 88,17" fill="none" stroke="#fff" stroke-width="2"/>
<path d="M103,12.5 L99,9 V16 Z" fill="#fff"/>
<path d="M108,14 H112 L110,16.6 Z" fill="#fff"/>
</g>
<path d="M126,14.5 H131 M126,17 H131 L128.5,20.5 Z" stroke="#fff" stroke-width="1" fill="#fff"/>
</svg>
<div class="kt" style="left:23px;top:16px;width:15px;height:16px;line-height:18px;background:#4a4a4a;color:#e8e4f4">1</div>
<div class="kt" style="left:54px;top:16px;width:15px;height:16px;line-height:18px;background:#4a4a4a">2</div>
<div class="kt" style="left:91px;top:16px;width:14px;height:16px;line-height:18px;background:rgba(70,70,70,0.45);color:rgba(255,255,255,0.35)">3</div>
<!-- window controls -->
<svg style="left:0;top:0" width="1" height="1">
<g fill="none" stroke="#fff" stroke-width="1">
<rect x="939.5" y="11.5" width="13" height="9"/>
<path d="M939.5,13.5 H952.5 M946,20 V15.5 M943.5,18 L946,15.5 L948.5,18"/>
<path d="M988,16.5 H998"/>
<rect x="1034.5" y="11.5" width="9" height="9"/>
<path d="M1080.3,11.3 L1090.2,21.2 M1090.2,11.3 L1080.3,21.2" stroke-width="1.2"/>
</g>
<!-- lightbulb -->
<path d="M738.5,50 Q738.5,47.5 737,46 Q735.5,44 736,42.5 Q737,40 740.5,40 Q744,40 745,42.5 Q745.5,44 744,46 Q742.5,47.5 742.5,50 Z M738.5,52 H742.5 M739,54 H742" fill="none" stroke="#fff" stroke-width="1"/>
<!-- person -->
<circle cx="1014" cy="45.5" r="3.8" fill="none" stroke="#fff" stroke-width="1.3"/>
<path d="M1008,55 Q1008.5,50 1014,49.5 Q1017,49.5 1018.5,51" fill="none" stroke="#fff" stroke-width="1.3"/>
<path d="M1019.5,49.5 V56 M1016.5,52.8 H1022.5" stroke="#fff" stroke-width="1.3"/>
</svg>
<!-- key tips -->
<div class="kt" style="left:24px;top:53px;width:16px;height:16px;line-height:18px">P</div>
<div class="kt" style="left:116px;top:53px;width:16px;height:17px;line-height:18px">H</div>
<div class="kt" style="left:221px;top:54px;width:15px;height:16px;line-height:18px">V</div>
<div class="kt" style="left:313px;top:54px;width:16px;height:16px;line-height:18px">K</div>
<div class="kt" style="left:397px;top:54px;width:15px;height:16px;line-height:18px">Ł</div>
<div class="kt" style="left:462px;top:54px;width:16px;height:16px;line-height:18px">U</div>
<div class="kt" style="left:527px;top:54px;width:16px;height:16px;line-height:18px">R</div>
<div class="kt" style="left:596px;top:54px;width:16px;height:16px;line-height:18px">O</div>
<div class="kt" style="left:670px;top:54px;width:16px;height:16px;line-height:18px">Q</div>
<div class="kt" style="left:823px;top:48px;width:17px;height:16px;line-height:18px">M</div>
<div class="kt" style="left:1054px;top:49px;width:19px;height:16px;line-height:18px">Y1</div>

</body></html>
